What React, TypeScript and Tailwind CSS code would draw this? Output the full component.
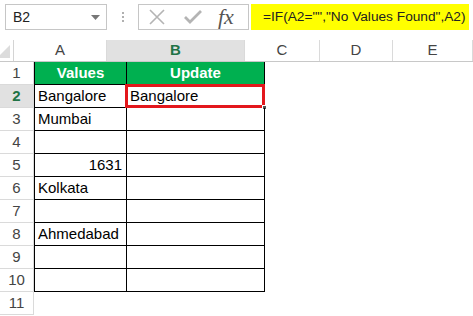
import React from "react";

const cols = [
  { key: "A", w: "w-[93px]" },
  { key: "B", w: "w-[138px]" },
  { key: "C", w: "w-[75px]" },
  { key: "D", w: "w-[73px]" },
  { key: "E", w: "w-[80px]" },
];

const values: (string | null)[] = [
  "Bangalore",
  "Mumbai",
  null,
  "1631",
  "Kolkata",
  null,
  "Ahmedabad",
  null,
  null,
];

function Toolbar() {
  return (
    <div className="flex h-[40px] items-start pl-[5px] pt-[4px]">
      <div className="flex h-[26px] w-[102px] items-center justify-between border border-[#c6c6c6] pl-[7px] pr-[6px] text-[14px] text-[#222]">
        <span>B2</span>
        <svg width="9" height="5" viewBox="0 0 9 5">
          <path d="M0 0 H9 L4.5 5 Z" fill="#777" />
        </svg>
      </div>
      <div className="flex h-[26px] w-[31px] flex-col items-center justify-center gap-[2px]">
        <span className="h-[2px] w-[2px] bg-[#b0b0b0]" />
        <span className="h-[2px] w-[2px] bg-[#b0b0b0]" />
        <span className="h-[2px] w-[2px] bg-[#b0b0b0]" />
      </div>
      <div className="flex h-[26px] w-[111px] items-center border border-[#c6c6c6] pl-[10px]">
        <svg width="16" height="16" viewBox="0 0 16 16">
          <path d="M1 1 L15 15 M15 1 L1 15" stroke="#b4b4b4" strokeWidth="1.6" fill="none" />
        </svg>
        <svg className="ml-[19px]" width="18" height="14" viewBox="0 0 18 14">
          <path d="M1 7 L6 12 L17 1" stroke="#b4b4b4" strokeWidth="2.8" fill="none" />
        </svg>
        <span className="ml-[16px] font-['Liberation_Serif',serif] text-[22px] italic leading-none text-[#555]">
          fx
        </span>
      </div>
      <div className="ml-[2px] flex h-[26px] w-[218px] items-center bg-[#ffff00] pl-[12px] text-[13.7px] text-[#222]">
        =IF(A2="","No Values Found",A2)
      </div>
    </div>
  );
}

function HeaderRow() {
  return (
    <div className="flex h-[22px] border-b border-[#c8c8c8]">
      <div className="relative w-[34px] border-r border-[#d4d4d4]">
        <svg className="absolute bottom-[3px] right-[3px]" width="13" height="13" viewBox="0 0 13 13">
          <path d="M13 0 V13 H0 Z" fill="#dcdcdc" />
        </svg>
      </div>
      {cols.map((c) => (
        <div
          key={c.key}
          className={`${c.w} flex shrink-0 items-center justify-center border-r border-[#dadada] text-[15px] ${
            c.key === "B" ? "bg-[#e1e1e1] font-bold text-[#217346]" : "text-[#444]"
          }`}
        >
          {c.key}
        </div>
      ))}
    </div>
  );
}

function RowHead({ n, active }: { n: number; active?: boolean }) {
  return (
    <div
      className={`flex w-[34px] shrink-0 items-center justify-center border-b border-r border-[#dadada] text-[15px] ${
        active ? "bg-[#e1e1e1] font-bold text-[#217346]" : "text-[#444]"
      }`}
    >
      {n}
    </div>
  );
}

export default function App() {
  return (
    <div className="h-[316px] w-[473px] overflow-hidden bg-white font-['Liberation_Sans',Arial,sans-serif] text-black">
      <Toolbar />
      <HeaderRow />

      <div className="flex h-[23px]">
        <RowHead n={1} />
        <div className="flex w-[93px] shrink-0 items-center justify-center border-b border-l border-r border-black bg-[#00b050] text-[15px] font-bold text-white">
          Values
        </div>
        <div className="flex w-[138px] shrink-0 items-center justify-center border-b border-r border-black bg-[#00b050] text-[15px] font-bold text-white">
          Update
        </div>
      </div>

      {values.map((v, i) => {
        const n = i + 2;
        const num = v !== null && /^\d+$/.test(v);
        return (
          <div key={n} className="flex h-[23px]">
            <RowHead n={n} active={n === 2} />
            <div
              className={`flex w-[93px] shrink-0 items-center border-b border-l border-r border-black pl-[3px] pr-[4px] text-[15px] ${
                num ? "justify-end" : ""
              }`}
            >
              {v}
            </div>
            <div className="relative flex w-[138px] shrink-0 items-center border-b border-r border-black pl-[3px] text-[15px]">
              {n === 2 ? "Bangalore" : null}
              {n === 2 ? (
                <>
                  <div className="absolute -left-[2px] -top-[1px] -bottom-[1px] -right-[1px] border-[3px] border-[#e3171c]" />
                  <div className="absolute -bottom-[3px] -right-[3px] h-[5px] w-[5px] border border-white bg-[#555]" />
                </>
              ) : null}
            </div>
          </div>
        );
      })}

      <div className="flex h-[23px]">
        <RowHead n={11} />
      </div>
    </div>
  );
}
